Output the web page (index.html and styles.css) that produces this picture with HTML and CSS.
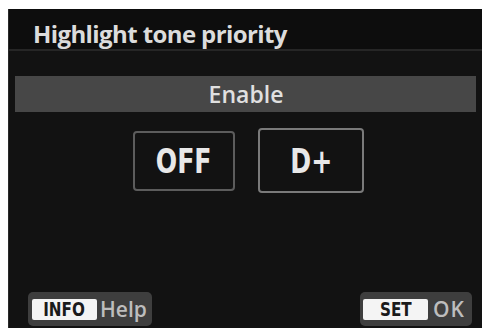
FILE: index.html
```html
<!DOCTYPE html>
<html>
<head>
<meta charset="utf-8">
<link rel="stylesheet" href="styles.css">
</head>
<body>
<div class="screen">
  <div class="title">Highlight tone priority</div>
  <div class="bar">Enable</div>
  <div class="options">
    <div class="opt off"><span class="optText">OFF</span></div>
    <div class="opt sel"><span class="optText">D+</span></div>
  </div>
  <div class="footer">
    <div class="pill"><span class="key"><span class="keyText">INFO</span></span><span class="lbl">Help</span></div>
    <div class="pill pillOk"><span class="key set"><span class="keyText">SET</span></span><span class="lbl">OK</span></div>
  </div>
</div>
</body>
</html>
```

FILE: styles.css
```css
html, body {
  margin: 0;
  padding: 0;
  background: #fff;
}
body {
  width: 484px;
  height: 332px;
  overflow: hidden;
}
.screen {
  margin: 9px 0 0 8px;
  width: 474px;
  height: 319px;
  background: #121212;
  border-left: 1px solid #2a2a2a;
  box-sizing: border-box;
  display: flex;
  flex-direction: column;
  font-family: "Open Sans", sans-serif;
  color: #e4e4e4;
}
.title {
  height: 42px;
  box-sizing: border-box;
  padding: 11px 0 0 24px;
  font-size: 24px;
  font-weight: 700;
  line-height: 28px;
  letter-spacing: -0.6px;
  color: #dcdcdc;
  background: #0d0d0d;
  border-bottom: 2px solid #262626;
}
.bar {
  margin: 25px 6px 0 6px;
  height: 36px;
  background: #474747;
  text-align: center;
  font-size: 23px;
  font-weight: 600;
  line-height: 36px;
  color: #e0e0e0;
  padding-left: 1px;
}
.options {
  display: flex;
  justify-content: center;
  align-items: center;
  gap: 23px;
  margin-top: 16px;
  height: 65px;
  padding-left: 6px;
}
.opt {
  box-sizing: border-box;
  border-radius: 4px;
  display: flex;
  align-items: center;
  justify-content: center;
  font-family: "DejaVu Sans", sans-serif;
  font-weight: 700;
  font-size: 34px;
  color: #e8e8e8;
}
.optText {
  display: inline-block;
  transform: scaleX(0.74);
}
.off {
  width: 102px;
  height: 60px;
  border: 2px solid #5c5c5c;
}
.sel {
  width: 106px;
  height: 65px;
  border: 2px solid #7a7a7a;
}
.footer {
  margin-top: auto;
  margin-bottom: 2px;
  display: flex;
  justify-content: space-between;
  padding: 0 10px 0 19px;
}
.pill {
  display: flex;
  align-items: center;
  height: 34px;
  padding: 0 5px 0 4px;
  background: #3e3e3e;
  border-radius: 5px;
}
.pillOk {
  padding: 0 7px 0 3px;
}
.key {
  display: flex;
  align-items: center;
  justify-content: center;
  width: 65px;
  background: #f4f4f4;
  color: #1a1a1a;
  font-family: "DejaVu Sans", sans-serif;
  font-weight: 700;
  font-size: 19px;
  height: 21px;
  border-radius: 2px;
}
.keyText {
  display: inline-block;
  transform: scaleX(0.8);
}
.lbl {
  font-family: "Open Sans", sans-serif;
  font-size: 21px;
  font-weight: 600;
  color: #bdbdbd;
  padding-left: 3px;
}
.pillOk .lbl {
  padding-left: 5px;
  letter-spacing: 1px;
}
```
